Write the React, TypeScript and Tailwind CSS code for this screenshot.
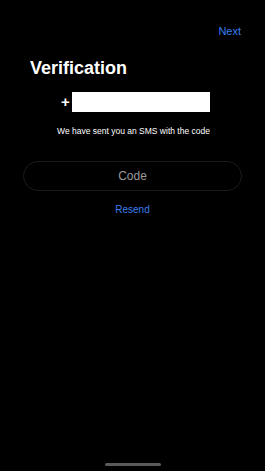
import React from "react";

export default function App() {
  return (
    <div
      className="w-[265px] h-[471px] bg-black flex flex-col text-white overflow-hidden"
      style={{ fontFamily: "'Liberation Sans', Arial, sans-serif" }}
    >
      <div className="flex justify-end pt-[24px] pr-[24px]">
        <span className="text-[11px] leading-[14px] text-[#3a7ef0]">Next</span>
      </div>
      <div className="pl-[30px] pt-[18px]">
        <h1 className="text-[18px] leading-[24px] font-bold">Verification</h1>
      </div>
      <div className="flex items-center justify-center pt-[12px]">
        <span className="text-[15px] font-bold leading-[20px] mr-[2px] ml-[6px]">+</span>
        <div className="w-[138px] h-[20px] bg-white" />
      </div>
      <p className="text-center text-[8.5px] leading-[10px] mt-[14px] pl-[2px]">
        We have sent you an SMS with the code
      </p>
      <div className="mx-[23px] mt-[25px] h-[30px] rounded-full border border-[#1c1c1c] flex items-center justify-center">
        <span className="text-[12px] text-[#9b9b9b]">Code</span>
      </div>
      <div className="flex justify-center mt-[12px]">
        <span className="text-[10px] leading-[14px] text-[#3a7ef0]">Resend</span>
      </div>
      <div className="flex-1" />
      <div className="flex justify-center pb-[5px]">
        <div className="w-[56px] h-[3px] rounded-full bg-[#5a5a5a]" />
      </div>
    </div>
  );
}
